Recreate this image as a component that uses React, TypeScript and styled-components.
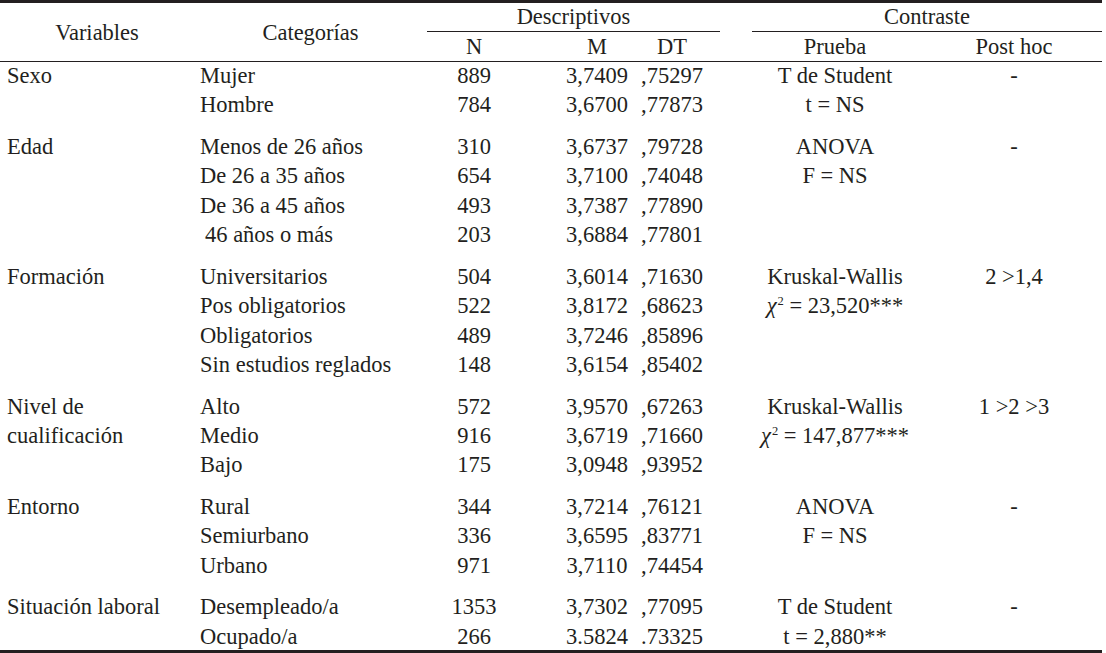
import React from "react";
import styled, { createGlobalStyle, css } from "styled-components";

const GlobalStyle = createGlobalStyle`
  html, body {
    margin: 0;
    padding: 0;
    background: #ffffff;
  }
  body {
    font-family: "Liberation Serif", "Times New Roman", serif;
    color: #231f20;
  }
`;

const COLUMNS = "194px 233px 94px 113px 86px 32px 174px 176px";

type Kind = "n" | "m" | "dt" | "test" | "post";

const kindStyles: Record<Kind, ReturnType<typeof css>> = {
  n: css`
    grid-column: 3;
  `,
  m: css`
    grid-column: 4;
    padding-left: 39px;
  `,
  dt: css`
    grid-column: 5;
    padding-right: 10px;
  `,
  test: css`
    grid-column: 7;
    padding-right: 8px;
  `,
  post: css`
    grid-column: 8;
  `,
};

const Table = styled.div`
  width: 1102px;
  font-size: 22.5px;
  border-top: 3px solid #231f20;
  border-bottom: 4px solid #231f20;
`;

const Header = styled.div`
  display: grid;
  grid-template-columns: ${COLUMNS};
  grid-template-rows: 29px 29px;
  border-bottom: 1px solid #231f20;
`;

const StubHead = styled.div<{ $col: number }>`
  grid-column: ${(p) => p.$col};
  grid-row: 1 / 3;
  display: flex;
  align-items: center;
  justify-content: center;
  line-height: 28px;
  padding-top: 1px;
`;

const SpanHead = styled.div<{ $from: number; $to: number }>`
  grid-column: ${(p) => p.$from} / ${(p) => p.$to};
  grid-row: 1;
  text-align: center;
  line-height: 28px;
  border-bottom: 1px solid #231f20;
`;

const SubHead = styled.div<{ $kind: Kind }>`
  grid-row: 2;
  text-align: center;
  line-height: 29px;
  ${(p) => kindStyles[p.$kind]}
`;

const Body = styled.div`
  margin-top: -1px;
`;

const Group = styled.div`
  display: grid;
  grid-template-columns: ${COLUMNS};
  line-height: 29.4px;
  margin-bottom: 12.2px;
  &:last-child {
    margin-bottom: -1.4px;
  }
`;

const VarCell = styled.div`
  grid-column: 1;
  padding-left: 7px;
`;

const CatCell = styled.div`
  grid-column: 2;
  padding-left: 6px;
`;

const DataCell = styled.div<{ $kind: Kind }>`
  text-align: center;
  ${(p) => kindStyles[p.$kind]}
`;

const Line = styled.div<{ $indent?: boolean }>`
  white-space: nowrap;
  padding-left: ${(p) => (p.$indent ? "5px" : "0")};
`;

const Chi = styled.span`
  font-style: italic;
`;

const Sup = styled.sup`
  font-size: 12.5px;
  line-height: 0;
  vertical-align: 8px;
  margin-left: 1px;
`;

type Row = { cat: string; n: string; m: string; dt: string; indent?: boolean };
type GroupData = {
  variable: string[];
  rows: Row[];
  test: React.ReactNode[];
  post: string;
};

const chi = (value: string) => (
  <>
    <Chi>χ</Chi>
    <Sup>2</Sup> = {value}
  </>
);

const groups: GroupData[] = [
  {
    variable: ["Sexo"],
    rows: [
      { cat: "Mujer", n: "889", m: "3,7409", dt: ",75297" },
      { cat: "Hombre", n: "784", m: "3,6700", dt: ",77873" },
    ],
    test: ["T de Student", "t = NS"],
    post: "-",
  },
  {
    variable: ["Edad"],
    rows: [
      { cat: "Menos de 26 años", n: "310", m: "3,6737", dt: ",79728" },
      { cat: "De 26 a 35 años", n: "654", m: "3,7100", dt: ",74048" },
      { cat: "De 36 a 45 años", n: "493", m: "3,7387", dt: ",77890" },
      { cat: "46 años o más", n: "203", m: "3,6884", dt: ",77801", indent: true },
    ],
    test: ["ANOVA", "F = NS"],
    post: "-",
  },
  {
    variable: ["Formación"],
    rows: [
      { cat: "Universitarios", n: "504", m: "3,6014", dt: ",71630" },
      { cat: "Pos obligatorios", n: "522", m: "3,8172", dt: ",68623" },
      { cat: "Obligatorios", n: "489", m: "3,7246", dt: ",85896" },
      { cat: "Sin estudios reglados", n: "148", m: "3,6154", dt: ",85402" },
    ],
    test: ["Kruskal-Wallis", chi("23,520***")],
    post: "2 >1,4",
  },
  {
    variable: ["Nivel de", "cualificación"],
    rows: [
      { cat: "Alto", n: "572", m: "3,9570", dt: ",67263" },
      { cat: "Medio", n: "916", m: "3,6719", dt: ",71660" },
      { cat: "Bajo", n: "175", m: "3,0948", dt: ",93952" },
    ],
    test: ["Kruskal-Wallis", chi("147,877***")],
    post: "1 >2 >3",
  },
  {
    variable: ["Entorno"],
    rows: [
      { cat: "Rural", n: "344", m: "3,7214", dt: ",76121" },
      { cat: "Semiurbano", n: "336", m: "3,6595", dt: ",83771" },
      { cat: "Urbano", n: "971", m: "3,7110", dt: ",74454" },
    ],
    test: ["ANOVA", "F = NS"],
    post: "-",
  },
  {
    variable: ["Situación laboral"],
    rows: [
      { cat: "Desempleado/a", n: "1353", m: "3,7302", dt: ",77095" },
      { cat: "Ocupado/a", n: "266", m: "3.5824", dt: ".73325" },
    ],
    test: ["T de Student", "t = 2,880**"],
    post: "-",
  },
];

export default function App() {
  return (
    <>
      <GlobalStyle />
      <Table>
        <Header>
          <StubHead $col={1}>Variables</StubHead>
          <StubHead $col={2}>Categorías</StubHead>
          <SpanHead $from={3} $to={6}>
            Descriptivos
          </SpanHead>
          <SpanHead $from={7} $to={9}>
            Contraste
          </SpanHead>
          <SubHead $kind="n">N</SubHead>
          <SubHead $kind="m">M</SubHead>
          <SubHead $kind="dt">DT</SubHead>
          <SubHead $kind="test">Prueba</SubHead>
          <SubHead $kind="post">Post hoc</SubHead>
        </Header>
        <Body>
          {groups.map((g, gi) => (
            <Group key={gi}>
              <VarCell>
                {g.variable.map((v, i) => (
                  <Line key={i}>{v}</Line>
                ))}
              </VarCell>
              <CatCell>
                {g.rows.map((r, i) => (
                  <Line key={i} $indent={r.indent}>
                    {r.cat}
                  </Line>
                ))}
              </CatCell>
              <DataCell $kind="n">
                {g.rows.map((r, i) => (
                  <Line key={i}>{r.n}</Line>
                ))}
              </DataCell>
              <DataCell $kind="m">
                {g.rows.map((r, i) => (
                  <Line key={i}>{r.m}</Line>
                ))}
              </DataCell>
              <DataCell $kind="dt">
                {g.rows.map((r, i) => (
                  <Line key={i}>{r.dt}</Line>
                ))}
              </DataCell>
              <DataCell $kind="test">
                {g.test.map((t, i) => (
                  <Line key={i}>{t}</Line>
                ))}
              </DataCell>
              <DataCell $kind="post">
                <Line>{g.post}</Line>
              </DataCell>
            </Group>
          ))}
        </Body>
      </Table>
    </>
  );
}
